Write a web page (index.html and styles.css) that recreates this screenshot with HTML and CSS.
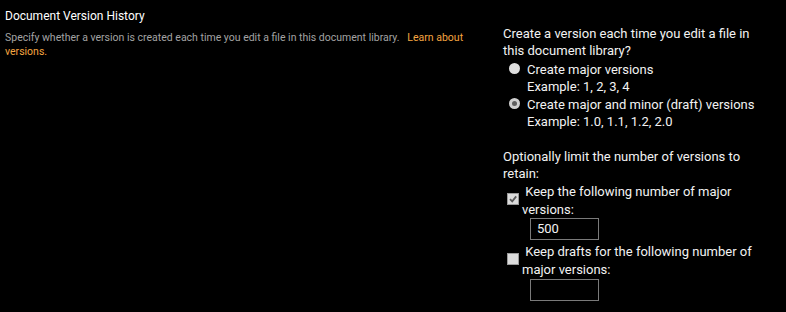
FILE: index.html
```html
<!DOCTYPE html>
<html>
<head>
<meta charset="utf-8">
<link rel="stylesheet" href="styles.css">
</head>
<body>
<div class="section">
  <div class="desc-col">
    <h3 class="title">Document Version History</h3>
    <p class="desc">Specify whether a version is created each time you edit a file in this document library. &nbsp; <a class="link" href="#">Learn about versions.</a></p>
  </div>
  <div class="ctrl-col">
    <div class="question">Create a version each time you edit a file in this document library?</div>
    <div class="opt first">
      <span class="radio"></span>
      <div class="opt-text">Create major versions<br>Example: 1, 2, 3, 4</div>
    </div>
    <div class="opt">
      <span class="radio checked"></span>
      <div class="opt-text">Create major and minor (draft) versions<br>Example: 1.0, 1.1, 1.2, 2.0</div>
    </div>
    <div class="question limit">Optionally limit the number of versions to retain:</div>
    <div class="chk-row">
      <span class="chk"><svg viewBox="0 0 10 10" width="10" height="10"><path d="M2 5.2 L4.2 7.4 L8.2 2.4" fill="none" stroke="#5a5a5a" stroke-width="1.8"/></svg></span>
      <div class="chk-text"> Keep the following number of major versions:</div>
    </div>
    <div class="num first-num">500</div>
    <div class="chk-row second">
      <span class="chk"></span>
      <div class="chk-text"> Keep drafts for the following number of major versions:</div>
    </div>
    <div class="num"></div>
  </div>
</div>
</body>
</html>
```
FILE: styles.css
```css
html, body {
  margin: 0;
  padding: 0;
  background: #000;
}
body {
  font-family: Roboto, "Open Sans", sans-serif;
  color: #f2f2f2;
  width: 786px;
  height: 312px;
  overflow: hidden;
}
.section {
  display: flex;
  padding: 8px 0 0 5px;
}
.desc-col {
  width: 470px;
  flex: none;
}
.title {
  margin: 0;
  font-size: 12px;
  font-weight: normal;
  line-height: 17px;
  color: #ffffff;
}
.desc {
  margin: 6px 0 0;
  font-size: 10.5px;
  line-height: 14px;
  color: #a3a3a3;
}
.link {
  color: #f5a540;
  text-decoration: none;
}
.ctrl-col {
  margin-left: 28px;
  padding-top: 17px;
  width: 257px;
  font-size: 13px;
  line-height: 17px;
}
.opt {
  display: flex;
  align-items: flex-start;
  margin-top: 1px;
}
.opt.first {
  margin-top: 2px;
}
.radio {
  flex: none;
  width: 11px;
  height: 11px;
  border-radius: 50%;
  background: #dedede;
  margin: 2px 7px 0 6px;
  box-sizing: border-box;
  position: relative;
}
.radio.checked {
  background: #cfcfcf;
}
.radio.checked::after {
  content: "";
  position: absolute;
  left: 3px;
  top: 3px;
  width: 5px;
  height: 5px;
  border-radius: 50%;
  background: #5e5e5e;
}
.limit {
  margin-top: 18px;
}
.chk-row {
  display: flex;
  align-items: flex-start;
  line-height: 18px;
  margin-top: 1px;
}
.chk {
  flex: none;
  width: 12px;
  height: 12px;
  margin: 10px 3px 0 4px;
  background: #dcdcdc;
  border: 1px solid #9a9a9a;
  box-sizing: border-box;
  display: flex;
  align-items: center;
  justify-content: center;
}
.chk svg {
  display: block;
}
.chk-text {
  white-space: pre-wrap;
}
.num {
  margin-left: 27px;
  width: 69px;
  height: 22px;
  box-sizing: border-box;
  border: 1px solid #7a7a7a;
  padding: 0 0 0 6px;
  line-height: 20px;
  font-size: 13px;
}
.first-num {
  margin-top: -1px;
}
.second {
  margin-top: 3px;
}
```
